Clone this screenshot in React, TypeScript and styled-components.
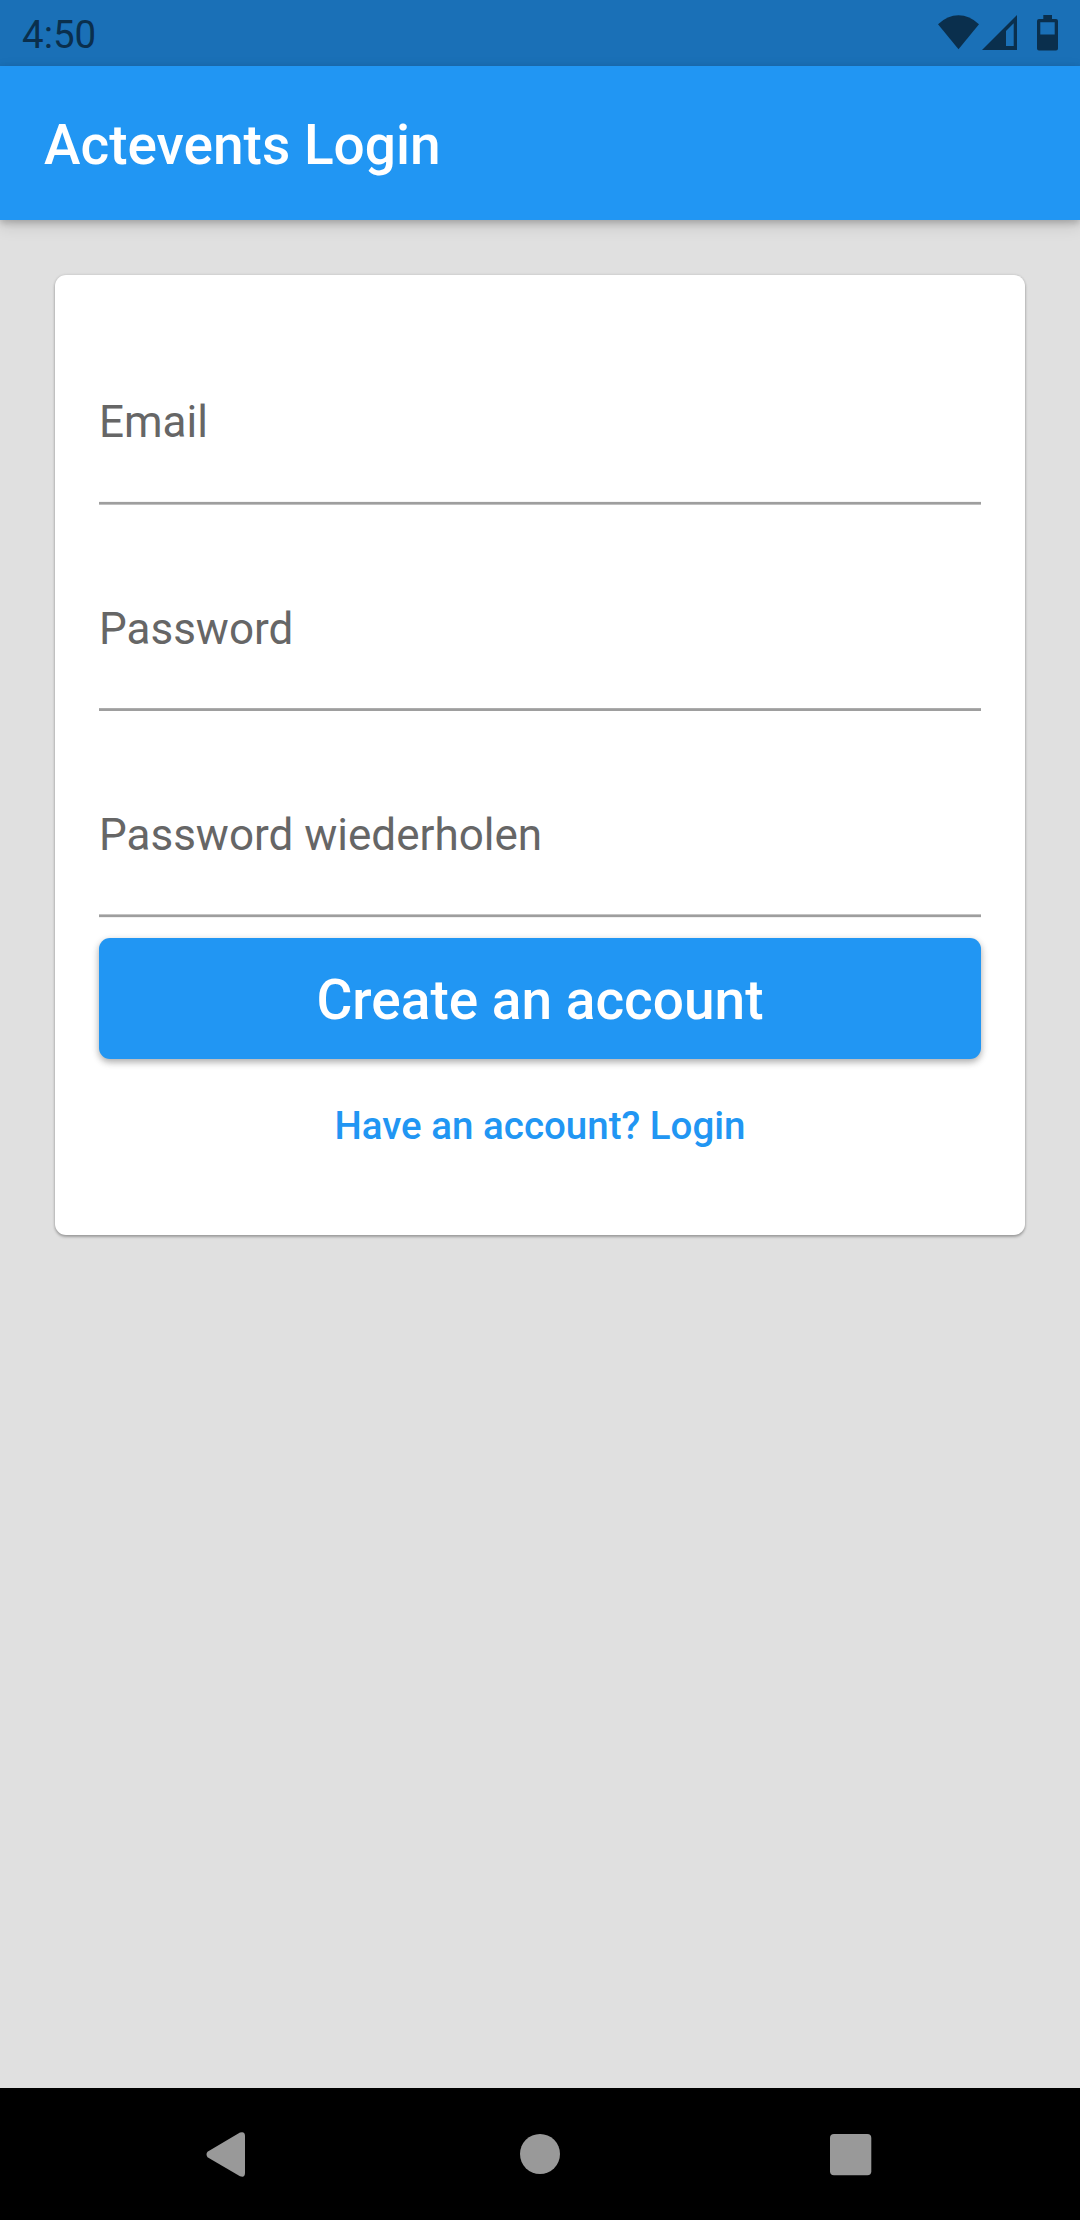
import React from 'react';
import styled, { createGlobalStyle } from 'styled-components';

const GlobalStyle = createGlobalStyle`
  html, body { margin: 0; padding: 0; background: #e0e0e0; }
  * { box-sizing: border-box; }
`;

const Screen = styled.div`
  display: flex;
  flex-direction: column;
  width: 1080px;
  height: 2220px;
  overflow: hidden;
  background: #e0e0e0;
  font-family: Roboto, 'Liberation Sans', sans-serif;
`;

const StatusBar = styled.header`
  display: flex;
  justify-content: space-between;
  height: 66px;
  padding: 0 22px;
  background: #1a70b7;
  color: #0a2f4d;
`;

const Clock = styled.span`
  font-size: 38.5px;
  line-height: 45px;
  padding-top: 12px;
`;

const StatusIcons = styled.svg`
  display: block;
  width: 120px;
  height: 40px;
  margin-top: 13px;
`;

const AppBar = styled.div`
  display: flex;
  align-items: center;
  flex: none;
  height: 154px;
  padding: 0 44px;
  background: #2196f3;
  box-shadow: 0 3px 7px rgba(0, 0, 0, 0.2), 0 6px 16px rgba(0, 0, 0, 0.12);
`;

const Title = styled.h1`
  margin: 4px 0 0;
  font-size: 55px;
  line-height: 64px;
  font-weight: 500;
  color: #fff;
`;

const Body = styled.main`
  flex: 1;
  padding: 55px;
`;

const Card = styled.form`
  display: flex;
  flex-direction: column;
  height: 959.5px;
  padding: 44px;
  border-radius: 11px;
  background: #fff;
  box-shadow: 0 2px 3px rgba(0, 0, 0, 0.28), 0 0 3px rgba(0, 0, 0, 0.14);
`;

const Field = styled.div<{ $height: number }>`
  display: flex;
  flex-direction: column;
  justify-content: flex-end;
  height: ${(p) => p.$height}px;
`;

const Label = styled.label`
  padding-bottom: 53px;
  font-size: 44px;
  line-height: 52px;
  color: #666;
`;

const Underline = styled.div<{ $first: string; $last: string }>`
  flex: none;
  height: 4px;
  background: linear-gradient(
    ${(p) => p.$first} 1px,
    #9e9e9e 1px,
    #9e9e9e 3px,
    ${(p) => p.$last} 3px
  );
`;

const SubmitButton = styled.button`
  height: 121px;
  margin: 20px 0 0;
  padding: 3px 0 0;
  border: 0;
  border-radius: 11px;
  background: #2196f3;
  color: #fff;
  font: 500 55px/64px Roboto, sans-serif;
  box-shadow: 0 3px 6px rgba(0, 0, 0, 0.24), 0 3px 10px rgba(0, 0, 0, 0.12);
`;

const SwitchLink = styled.button`
  margin: 44px 0 0;
  padding: 0;
  border: 0;
  background: none;
  color: #2196f3;
  font: 500 38.5px/45px Roboto, sans-serif;
`;

const NavBar = styled.nav`
  flex: none;
  height: 132px;
  background: #000;
`;

const NavIcons = styled.svg`
  display: block;
`;

const fields = [
  { label: 'Email', height: 186, first: '#f5f5f5', last: '#c0c0c0' },
  { label: 'Password', height: 207, first: '#acacac', last: '#ffffff' },
  { label: 'Password wiederholen', height: 206, first: '#c4c4c4', last: '#f0f0f0' },
];

export default function App() {
  return (
    <>
      <GlobalStyle />
      <Screen>
        <StatusBar>
          <Clock>4:50</Clock>
          <StatusIcons viewBox="938 13 120 40" fill="currentColor">
            <path d="M938 24.2Q947.5 15.2 958.5 15.2T979 24.2L958.5 49.3Z" />
            <path fillRule="evenodd" d="M982 50L1017 15V50ZM1006 31V46H1013.7V23.3Z" />
            <path
              fillRule="evenodd"
              d="M1043.3 15H1052V19H1056Q1058 19 1058 21V48.5Q1058 50.5 1056 50.5H1039Q1037 50.5 1037 48.5V21Q1037 19 1039 19H1043.3ZM1040.3 22.3V34.5H1054.7V22.3Z"
            />
          </StatusIcons>
        </StatusBar>
        <AppBar>
          <Title>Actevents Login</Title>
        </AppBar>
        <Body>
          <Card>
            {fields.map((f) => (
              <Field key={f.label} $height={f.height}>
                <Label>{f.label}</Label>
                <Underline $first={f.first} $last={f.last} />
              </Field>
            ))}
            <SubmitButton type="button">Create an account</SubmitButton>
            <SwitchLink type="button">Have an account? Login</SwitchLink>
          </Card>
        </Body>
        <NavBar>
          <NavIcons width="1080" height="132" viewBox="0 2088 1080 132" fill="#999">
            <path d="M207.5 2151.8L240 2132.6Q245 2131 245 2136V2173Q245 2178 240 2176.2L207.5 2157.2Q205.5 2154.5 207.5 2151.8Z" />
            <circle cx="540" cy="2154" r="20" />
            <rect x="830" y="2134" width="41.3" height="41.3" rx="4" />
          </NavIcons>
        </NavBar>
      </Screen>
    </>
  );
}
